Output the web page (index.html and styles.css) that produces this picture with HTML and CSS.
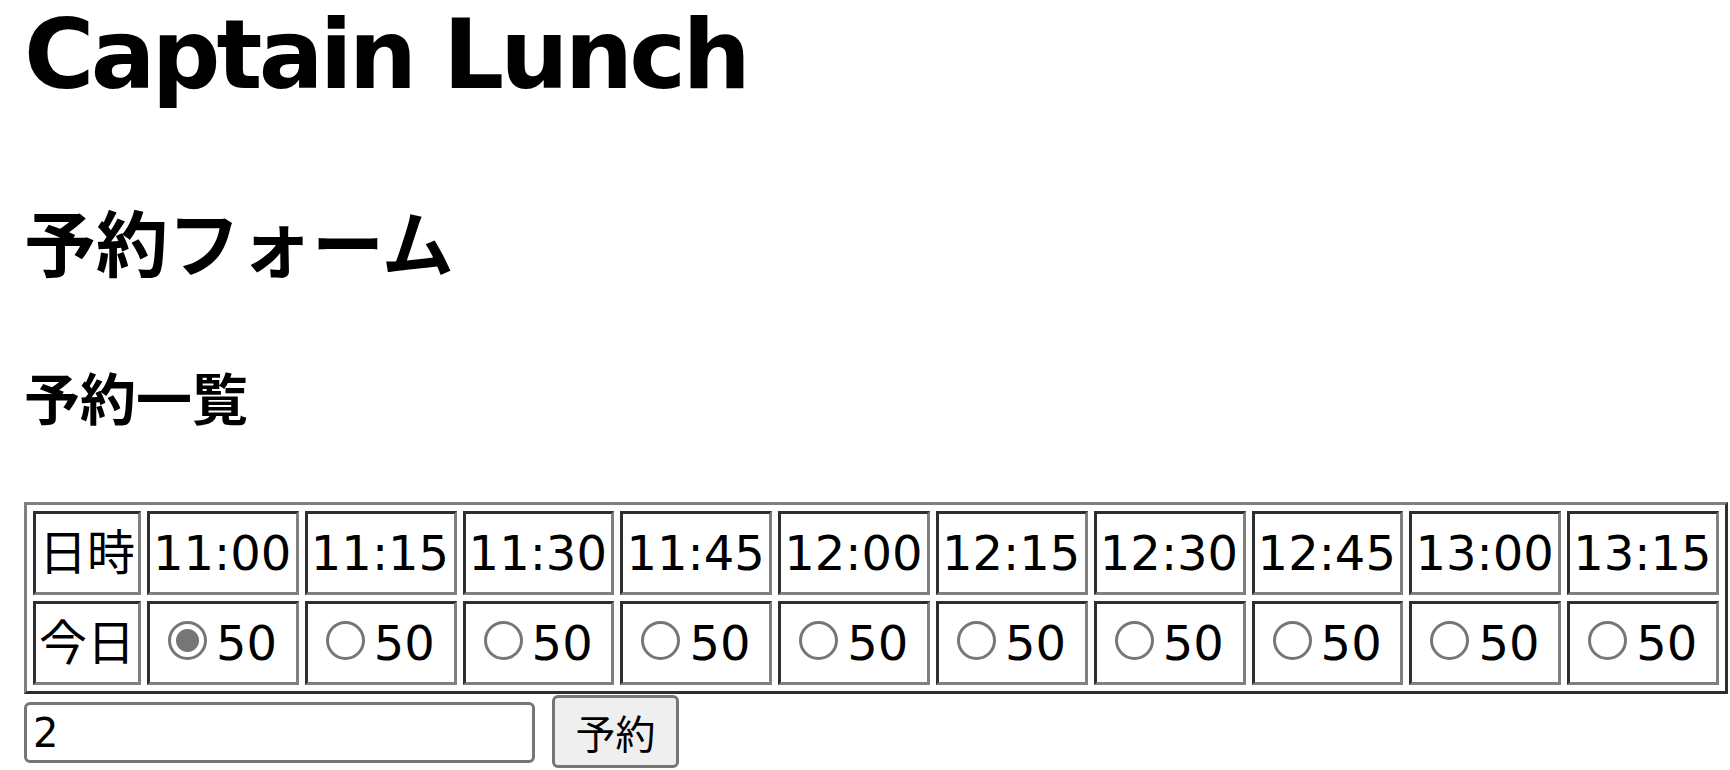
FILE: index.html
```html
<!DOCTYPE html>
<html lang="ja">
<head>
<meta charset="utf-8">
<title>Captain Lunch</title>
<link rel="stylesheet" href="styles.css">
</head>
<body>
<main class="page">
<h1 class="title">Captain Lunch</h1>
<h2 class="form-title">予約フォーム</h2>
<h3 class="list-title">予約一覧</h3>
<table class="slots">
  <tr>
    <td class="day">日時</td>
    <td class="slot">11:00</td>
    <td class="slot">11:15</td>
    <td class="slot">11:30</td>
    <td class="slot">11:45</td>
    <td class="slot">12:00</td>
    <td class="slot">12:15</td>
    <td class="slot">12:30</td>
    <td class="slot">12:45</td>
    <td class="slot">13:00</td>
    <td class="slot">13:15</td>
  </tr>
  <tr>
    <td class="day">今日</td>
    <td class="slot"><input class="radio" type="radio" name="time" value="11:00" checked>50</td>
    <td class="slot"><input class="radio" type="radio" name="time" value="11:15">50</td>
    <td class="slot"><input class="radio" type="radio" name="time" value="11:30">50</td>
    <td class="slot"><input class="radio" type="radio" name="time" value="11:45">50</td>
    <td class="slot"><input class="radio" type="radio" name="time" value="12:00">50</td>
    <td class="slot"><input class="radio" type="radio" name="time" value="12:15">50</td>
    <td class="slot"><input class="radio" type="radio" name="time" value="12:30">50</td>
    <td class="slot"><input class="radio" type="radio" name="time" value="12:45">50</td>
    <td class="slot"><input class="radio" type="radio" name="time" value="13:00">50</td>
    <td class="slot"><input class="radio" type="radio" name="time" value="13:15">50</td>
  </tr>
</table>
<div class="order">
  <input class="count" type="text" value="2">
  <button class="submit" type="button">予約</button>
</div>
</main>
</body>
</html>
```

FILE: styles.css
```css
html {
  background: #ffffff;
}

body {
  margin: 0;
  color: #000000;
  font-family: "DejaVu Sans", "Noto Sans CJK JP", sans-serif;
  font-size: 48px;
}

.page {
  display: block;
  width: 1706px;
  padding: 0 0 0 24px;
}

.title {
  margin: -17px 0 59px;
  font-family: "DejaVu Sans", sans-serif;
  font-weight: bold;
  font-size: 96px;
  line-height: 144px;
  letter-spacing: -3.8px;
  white-space: nowrap;
}

.form-title {
  margin: 0 0 60px;
  font-family: "Noto Sans CJK JP", sans-serif;
  font-weight: bold;
  font-size: 72px;
  line-height: 108px;
}

.list-title {
  margin: 0 0 64px;
  font-family: "Noto Sans CJK JP", sans-serif;
  font-weight: bold;
  font-size: 56px;
  line-height: 84px;
}

.slots {
  border-collapse: separate;
  border-spacing: 6px;
  border-style: solid;
  border-width: 3px;
  border-color: #808080 #2e2e2e #2e2e2e #808080;
  width: max-content;
}

.slots td {
  border-style: solid;
  border-width: 3px;
  border-color: #2e2e2e #808080 #808080 #2e2e2e;
  padding: 3px;
  line-height: 72px;
  white-space: nowrap;
  vertical-align: middle;
  text-align: left;
}

.slots .slot {
  width: 139.8px;
}

.radio {
  appearance: none;
  -webkit-appearance: none;
  box-sizing: border-box;
  width: 39px;
  height: 39px;
  margin: 9px 9px 0 15px;
  border: 3px solid #767676;
  border-radius: 50%;
  background: #ffffff;
  vertical-align: baseline;
}

.radio:checked {
  background: radial-gradient(circle, #767676 0, #767676 11px, #ffffff 12px);
}

.order {
  display: flex;
  align-items: flex-start;
  gap: 17px;
  padding-top: 1px;
}

.count {
  box-sizing: border-box;
  width: 511px;
  height: 61px;
  margin: 7px 0 0;
  padding: 3px 6px;
  border: 3px solid #767676;
  border-radius: 6px;
  font-family: "DejaVu Sans", sans-serif;
  font-size: 40px;
  color: #000000;
  background: #ffffff;
  outline: none;
}

.submit {
  box-sizing: border-box;
  width: 127px;
  height: 73px;
  margin: 0;
  padding: 3px 18px;
  border: 3px solid #767676;
  border-radius: 6px;
  background: #efefef;
  font-family: "Noto Sans CJK JP", sans-serif;
  font-size: 40px;
  color: #000000;
}
```
